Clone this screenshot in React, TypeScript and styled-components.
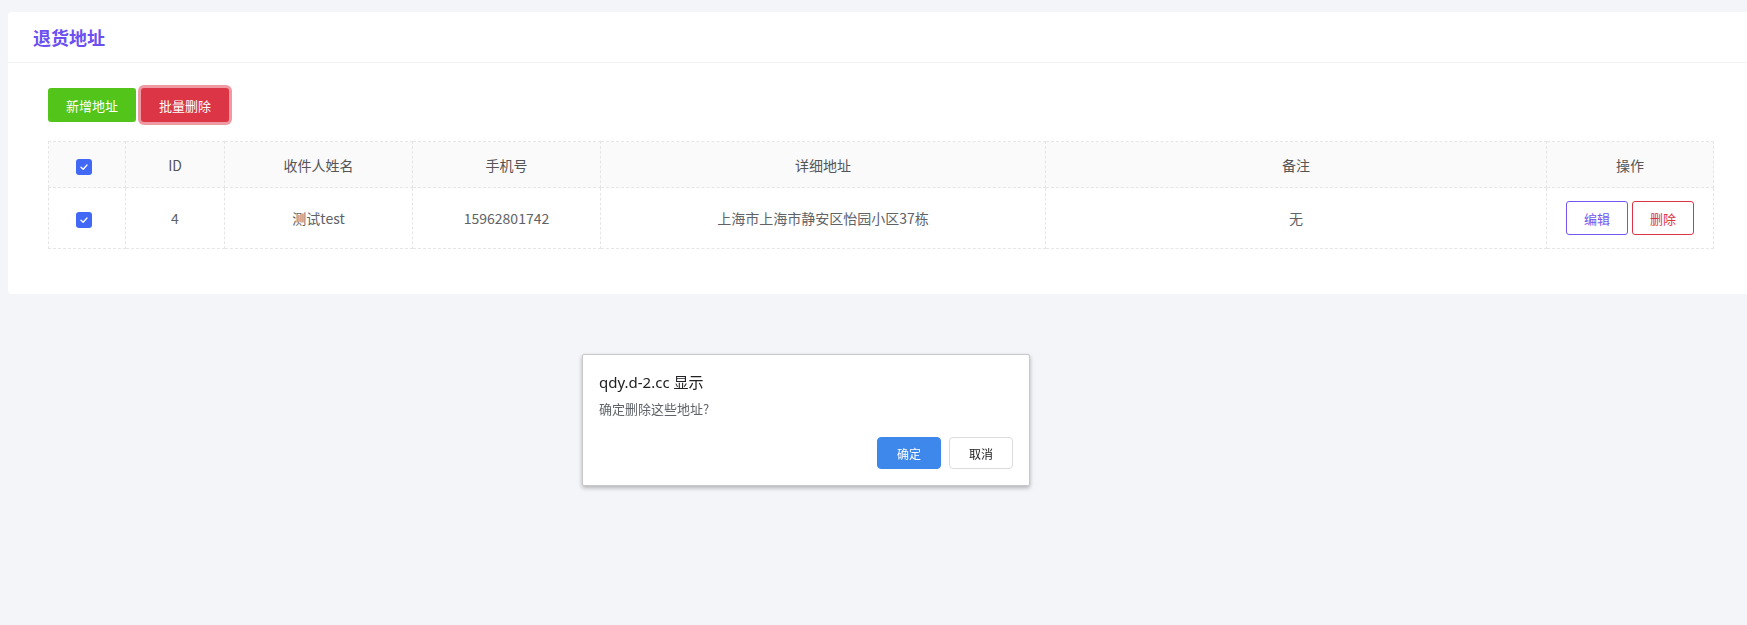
import React from 'react';
import styled, { createGlobalStyle } from 'styled-components';

const GlobalStyle = createGlobalStyle`
  html, body {
    margin: 0;
    padding: 0;
    background: #f4f5f9;
    font-family: "Noto Sans", "Noto Sans CJK SC", sans-serif;
    overflow: hidden;
  }
`;

const Page = styled.div`
  min-height: 625px;
  padding-top: 12px;
  padding-left: 8px;
  box-sizing: border-box;
`;

const Card = styled.div`
  background: #fff;
  border-radius: 4px 0 0 4px;
  width: calc(100vw - 8px);
`;

const CardHeader = styled.div`
  height: 50px;
  display: flex;
  align-items: center;
  padding-left: 25px;
  border-bottom: 1px solid #f0f1f4;
`;

const Title = styled.h2`
  margin: 0;
  font-size: 18px;
  font-weight: 700;
  color: #6b4ff0;
  font-family: "Noto Sans CJK SC", sans-serif;
`;

const CardBody = styled.div`
  padding: 25px 34px 45px 40px;
`;

const Toolbar = styled.div`
  display: flex;
  gap: 5px;
  margin-bottom: 19px;
`;

const Button = styled.button<{ $tone: 'green' | 'red' }>`
  width: 88px;
  height: 34px;
  border: none;
  border-radius: 3px;
  color: #fff;
  font-size: 13px;
  font-family: "Noto Sans CJK SC", sans-serif;
  background: ${p => (p.$tone === 'green' ? '#52c41a' : '#dc3545')};
  box-shadow: ${p => (p.$tone === 'red' ? '0 0 0 3px rgba(220, 53, 69, 0.5)' : 'none')};
  cursor: pointer;
`;

const Table = styled.table`
  width: 100%;
  border-collapse: collapse;
  table-layout: fixed;
  font-family: "Noto Sans CJK SC", sans-serif;
  font-size: 14px;
  color: #606266;
`;

const Th = styled.th`
  height: 45px;
  padding: 0;
  font-weight: 400;
  background: #fafafa;
  border: 1px dashed #e6e6e6;
  text-align: center;
  color: #555;
`;

const Td = styled.td`
  height: 60px;
  padding: 0;
  border: 1px dashed #e6e6e6;
  text-align: center;
`;

const CheckBox = styled.span`
  display: inline-flex;
  width: 16px;
  height: 16px;
  border-radius: 3px;
  background: #4169f5;
  align-items: center;
  justify-content: center;
  vertical-align: middle;
  margin-right: 6px;
`;

const ActionWrap = styled.div`
  display: flex;
  justify-content: center;
  gap: 4px;
`;

const OutlineButton = styled.button<{ $color: string }>`
  width: 62px;
  height: 34px;
  background: #fff;
  border: 1px solid ${p => p.$color};
  color: ${p => p.$color};
  border-radius: 3px;
  font-size: 13px;
  font-family: "Noto Sans CJK SC", sans-serif;
  cursor: pointer;
`;

const Dialog = styled.div`
  position: fixed;
  left: 582px;
  top: 354px;
  width: 448px;
  height: 132px;
  box-sizing: border-box;
  background: #fff;
  border: 1px solid #c8c8cc;
  border-radius: 2px;
  box-shadow: 0 2px 4px rgba(0, 0, 0, 0.28);
  padding: 17px 16px 16px 16px;
  display: flex;
  flex-direction: column;
`;

const DialogTitle = styled.div`
  font-size: 15px;
  color: #202124;
  line-height: 20px;
  font-family: "Noto Sans", "Noto Sans CJK SC", sans-serif;
`;

const DialogMessage = styled.div`
  margin-top: 8px;
  font-size: 13px;
  color: #5f6368;
  line-height: 18px;
  font-family: "Noto Sans CJK SC", sans-serif;
`;

const DialogActions = styled.div`
  margin-top: auto;
  display: flex;
  justify-content: flex-end;
  gap: 8px;
`;

const DialogButton = styled.button<{ $primary?: boolean }>`
  width: 64px;
  height: 32px;
  border-radius: 4px;
  font-size: 12px;
  font-family: "Noto Sans CJK SC", sans-serif;
  border: 1px solid ${p => (p.$primary ? '#3d86eb' : '#dadce0')};
  background: ${p => (p.$primary ? '#3f88eb' : '#fff')};
  color: ${p => (p.$primary ? '#fff' : '#202124')};
  cursor: pointer;
`;

const Check = () => (
  <CheckBox>
    <svg width="10" height="10" viewBox="0 0 10 10" fill="none">
      <path d="M2 5.2 L4.2 7.2 L8 3" stroke="#fff" strokeWidth="1.3" strokeLinecap="round" strokeLinejoin="round" />
    </svg>
  </CheckBox>
);

const columns = [
  { key: 'check', width: 77 },
  { key: 'ID', width: 99 },
  { key: '收件人姓名', width: 188 },
  { key: '手机号', width: 188 },
  { key: '详细地址', width: 445 },
  { key: '备注', width: 501 },
  { key: '操作', width: 167 },
];

const rows = [
  { id: 4, name: '测试test', phone: '15962801742', address: '上海市上海市静安区怡园小区37栋', remark: '无' },
];

export default function App() {
  return (
    <>
      <GlobalStyle />
      <Page>
        <Card>
          <CardHeader>
            <Title>退货地址</Title>
          </CardHeader>
          <CardBody>
            <Toolbar>
              <Button $tone="green">新增地址</Button>
              <Button $tone="red">批量删除</Button>
            </Toolbar>
            <Table>
              <colgroup>
                {columns.map(c => (
                  <col key={c.key} style={{ width: c.width }} />
                ))}
              </colgroup>
              <thead>
                <tr>
                  <Th><Check /></Th>
                  <Th>ID</Th>
                  <Th>收件人姓名</Th>
                  <Th>手机号</Th>
                  <Th>详细地址</Th>
                  <Th>备注</Th>
                  <Th>操作</Th>
                </tr>
              </thead>
              <tbody>
                {rows.map(r => (
                  <tr key={r.id}>
                    <Td><Check /></Td>
                    <Td>{r.id}</Td>
                    <Td>{r.name}</Td>
                    <Td>{r.phone}</Td>
                    <Td>{r.address}</Td>
                    <Td>{r.remark}</Td>
                    <Td>
                      <ActionWrap>
                        <OutlineButton $color="#7357f0">编辑</OutlineButton>
                        <OutlineButton $color="#dc3545">删除</OutlineButton>
                      </ActionWrap>
                    </Td>
                  </tr>
                ))}
              </tbody>
            </Table>
          </CardBody>
        </Card>
      </Page>
      <Dialog>
        <DialogTitle>qdy.d-2.cc 显示</DialogTitle>
        <DialogMessage>确定删除这些地址?</DialogMessage>
        <DialogActions>
          <DialogButton $primary>确定</DialogButton>
          <DialogButton>取消</DialogButton>
        </DialogActions>
      </Dialog>
    </>
  );
}
